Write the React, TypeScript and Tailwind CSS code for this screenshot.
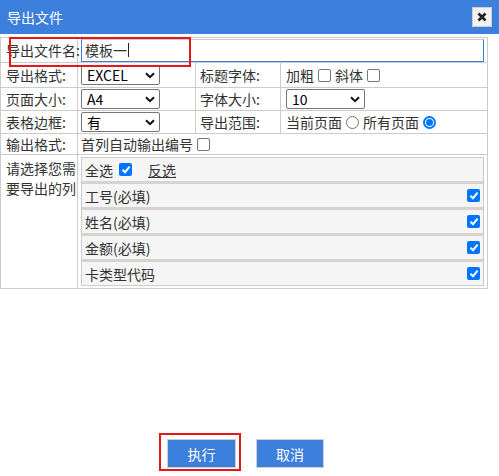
import React from 'react';

const FONT = '"Noto Sans CJK SC", "Noto Sans", sans-serif';

function Select({ value }: { value: string }) {
  return (
    <div className="flex h-[20px] w-[79px] items-center justify-between rounded-[2px] border border-[#767676] bg-white pl-[5px] pr-[4px] text-[14px] text-black">
      <span className="leading-none">{value}</span>
      <svg width="10" height="7" viewBox="0 0 10 7">
        <path d="M1 1.2 L5 5.2 L9 1.2" fill="none" stroke="#111" strokeWidth="2" />
      </svg>
    </div>
  );
}

function Box({ checked = false }: { checked?: boolean }) {
  if (checked) {
    return (
      <span className="inline-flex h-[13px] w-[13px] items-center justify-center rounded-[2px] bg-[#0075ff] align-middle">
        <svg width="10" height="9" viewBox="0 0 10 9">
          <path d="M1.5 4.8 L4 7.2 L8.6 1.6" fill="none" stroke="#fff" strokeWidth="2" />
        </svg>
      </span>
    );
  }
  return <span className="inline-block h-[13px] w-[13px] rounded-[2px] border border-[#767676] bg-white align-middle" />;
}

function Radio({ checked = false }: { checked?: boolean }) {
  if (checked) {
    return (
      <span className="inline-flex h-[13px] w-[13px] items-center justify-center rounded-full border-2 border-[#0075ff] bg-white align-middle">
        <span className="h-[7px] w-[7px] rounded-full bg-[#0075ff]" />
      </span>
    );
  }
  return <span className="inline-block h-[13px] w-[13px] rounded-full border border-[#767676] bg-white align-middle" />;
}

const columns = ['工号(必填)', '姓名(必填)', '金额(必填)', '卡类型代码'];

export default function App() {
  const td = 'border border-[#cccccc] align-middle whitespace-nowrap';
  return (
    <div className="relative flex h-[476px] w-full flex-col bg-white text-[14px] leading-[20px] text-[#333]" style={{ fontFamily: FONT }}>
      {/* title bar */}
      <div className="flex h-[34px] shrink-0 items-center justify-between bg-[#3c7fdc] pl-[7px] pr-[7px]">
        <span className="text-[14px] text-white">导出文件</span>
        <button className="flex h-[20px] w-[20px] items-center justify-center border border-[#cfcfcf] bg-[#f2f2f2]">
          <svg width="10" height="10" viewBox="0 0 10 10">
            <path d="M1.5 1.5 L8.5 8.5 M8.5 1.5 L1.5 8.5" stroke="#222" strokeWidth="2.6" />
          </svg>
        </button>
      </div>

      <table className="mt-[3px] w-[487px] table-fixed border-collapse">
        <colgroup>
          <col className="w-[77px]" />
          <col className="w-[118px]" />
          <col className="w-[85px]" />
          <col className="w-[207px]" />
        </colgroup>
        <tbody>
          <tr className="h-[25px]">
            <td className={`${td} pl-[5px]`}>导出文件名:</td>
            <td className={`${td} px-[3px]`} colSpan={3}>
              <div className="flex h-[23px] items-center border border-[#3c7fdc] border-t-[#cccccc] pl-[3px] text-[#333]">
                模板一<span className="ml-[1px] inline-block h-[14px] w-px bg-[#222]" />
              </div>
            </td>
          </tr>
          <tr className="h-[25px]">
            <td className={`${td} pl-[5px]`}>导出格式:</td>
            <td className={`${td} pl-[3px]`}>
              <Select value="EXCEL" />
            </td>
            <td className={`${td} pl-[4px]`}>标题字体:</td>
            <td className={`${td} pl-[5px]`}>
              <span className="inline-flex items-center gap-[4px]">
                加粗 <Box /> 斜体 <Box />
              </span>
            </td>
          </tr>
          <tr className="h-[23px]">
            <td className={`${td} pl-[5px]`}>页面大小:</td>
            <td className={`${td} pl-[3px]`}>
              <Select value="A4" />
            </td>
            <td className={`${td} pl-[4px]`}>字体大小:</td>
            <td className={`${td} pl-[5px]`}>
              <Select value="10" />
            </td>
          </tr>
          <tr className="h-[23px]">
            <td className={`${td} pl-[5px]`}>表格边框:</td>
            <td className={`${td} pl-[3px]`}>
              <Select value="有" />
            </td>
            <td className={`${td} pl-[4px]`}>导出范围:</td>
            <td className={`${td} pl-[5px]`}>
              <span className="inline-flex items-center gap-[4px]">
                当前页面 <Radio /> 所有页面 <Radio checked />
              </span>
            </td>
          </tr>
          <tr className="h-[21px]">
            <td className={`${td} pl-[5px]`}>输出格式:</td>
            <td className={`${td} pl-[3px]`} colSpan={3}>
              <span className="inline-flex items-center gap-[4px]">
                首列自动输出编号 <Box />
              </span>
            </td>
          </tr>
          <tr>
            <td className={`${td} !align-top pl-[5px] pt-[3px]`}>
              请选择您需
              <br />
              要导出的列
            </td>
            <td className={`${td} px-[3px] py-[2px]`} colSpan={3}>
              <div className="flex flex-col border border-[#cccccc] bg-[#f5f5f5]">
                <div className="flex h-[23px] items-center pl-[3px]">
                  <span>全选</span>
                  <span className="ml-[6px] flex">
                    <Box checked />
                  </span>
                  <span className="ml-[16px] underline">反选</span>
                </div>
                {columns.map((c) => (
                  <div key={c} className="flex h-[26px] items-center justify-between border-t-[3px] border-[#d6d2ce] pl-[3px] pr-[3px]">
                    <span>{c}</span>
                    <Box checked />
                  </div>
                ))}
              </div>
            </td>
          </tr>
        </tbody>
      </table>

      <div className="flex-1" />

      <div className="mb-[8px] flex justify-center gap-[20px] pr-[8px]">
        <button className="h-[29px] w-[69px] border border-[#cfcfcf] bg-[#3c7fdc] text-[14px] text-white">执行</button>
        <button className="h-[29px] w-[68px] border border-[#cfcfcf] bg-[#3c7fdc] text-[14px] text-white">取消</button>
      </div>

      {/* red annotation boxes */}
      <div className="pointer-events-none absolute left-[9px] top-[37px] h-[30px] w-[182px] border-2 border-[#e8161b]" />
      <div className="pointer-events-none absolute left-[159px] top-[433px] h-[38px] w-[82px] border-2 border-[#e8161b]" />
    </div>
  );
}
